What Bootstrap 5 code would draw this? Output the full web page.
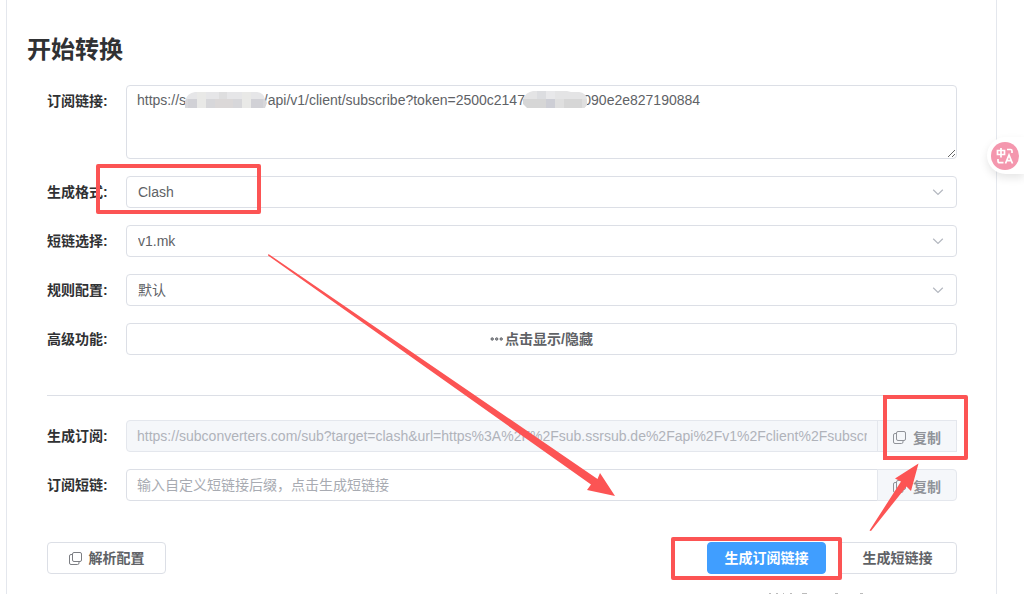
<!DOCTYPE html>
<html lang="zh-CN">
<head>
<meta charset="utf-8">
<meta name="viewport" content="width=device-width, initial-scale=1">
<title>开始转换</title>
<link href="https://cdn.jsdelivr.net/npm/bootstrap@5.3.0/dist/css/bootstrap.min.css" rel="stylesheet">
<style>
  body { font-family: "Liberation Sans", "Noto Sans CJK SC", sans-serif; font-size: 14px; line-height: 20px; color: #606266; background: #fff; }
  .page-shell { height: 100vh; overflow: hidden; padding-left: 6px; padding-right: 27px; }
  .panel { min-height: 100vh; border-left: 1px solid #e4e7ed; border-right: 1px solid #e4e7ed; padding: 34px 39px 0 40px; }
  .panel-title { font-size: 24px; line-height: 32px; font-weight: 700; color: #303133; margin: 0 0 19px -20px; }
  .field-row { display: flex; align-items: flex-start; margin-bottom: 17px; }
  .field-label { flex: none; width: 79px; font-weight: 700; color: #303133; line-height: 32px; }
  .field-body { flex: 1 1 0; min-width: 0; }
  .form-control, .form-select { font-size: 14px; line-height: 20px; color: #606266; border: 1px solid #dcdfe6; border-radius: 4px; padding: 5px 10px; height: 32px; }
  .form-select { padding: 5px 30px 5px 11px; background-position: right 12px center; background-size: 12px 12px;
    background-image: url("data:image/svg+xml,%3Csvg xmlns='http://www.w3.org/2000/svg' viewBox='0 0 12 12'%3E%3Cpath d='M1.2 3.7 6 8.4l4.8-4.7' fill='none' stroke='%23b4b8c0' stroke-width='1.2'/%3E%3C/svg%3E"); }
  textarea.form-control { height: 74px; padding-top: 4px; resize: vertical; }
  .form-control:disabled { background: #f5f7fa; border-color: #e4e7ed; color: #b0b3ba; opacity: 1; }
  .form-control::placeholder { color: #a8abb2; opacity: 1; }
  .btn { font-size: 14px; line-height: 20px; font-weight: 700; color: #606266; border: 1px solid #dcdfe6; border-radius: 4px; padding: 5px 0; height: 32px; display: inline-flex; align-items: center; justify-content: center; gap: 7px; background: #fff; }
  .btn-action { width: 119px; }
  .btn-main { background: #409eff; border-color: #409eff; color: #fff; }
  .btn-copy { width: 80px; padding-top: 7px; padding-bottom: 3px; background: #f5f7fa; color: #909399; border-color: #e4e7ed; }
  .btn-copy svg { margin-bottom: 2px; }
  .btn-dots { gap: 1px; }
  .submit-group { gap: 12px; }
  .form-rule { height: 1px; background: #dcdfe6; margin: 40px 0 24px; border: 0; opacity: 1; }
  .masked { left: 57px; top: 7px; }
  .masked-token { left: 397px; top: 6px; }
  .callout-box { border: 4px solid #fc5454; border-radius: 2px; pointer-events: none; z-index: 10; }
  .callout-format { left: 49px; top: -12px; width: 165px; height: 50px; }
  .callout-copy { right: -11px; top: -25px; width: 85px; height: 65px; }
  .callout-submit { left: -36px; top: -5px; width: 171px; height: 43px; }
  .callout-arrows { left: 0; top: 0; width: 100%; height: 594px; pointer-events: none; z-index: 11; }
  .translate-tab { right: 0; top: 137px; width: 37px; height: 37px; padding: 0 0 0 4px; border: 0; border-radius: 19px 0 0 19px; background: #fff; box-shadow: 0 4px 9px rgba(0,0,0,.1); display: flex; align-items: center; z-index: 12; }
</style>
</head>
<body>
<div class="page-shell position-relative">
  <main class="panel">
    <h1 class="panel-title">开始转换</h1>
    <form>
      <div class="field-row">
        <label class="field-label" for="source">订阅链接:</label>
        <div class="field-body position-relative">
          <textarea class="form-control d-block" id="source" spellcheck="false">https://s&nbsp;&nbsp;&nbsp;&nbsp;&nbsp;&nbsp;&nbsp;&nbsp;&nbsp;&nbsp;&nbsp;&nbsp;&nbsp;&nbsp;&nbsp;&nbsp;&nbsp;&nbsp;&nbsp;&nbsp;/api/v1/client/subscribe?token=2500c2147&nbsp;&nbsp;&nbsp;&nbsp;&nbsp;&nbsp;&nbsp;&nbsp;&nbsp;&nbsp;&nbsp;&nbsp;&nbsp;&nbsp;&nbsp;090e2e827190884</textarea>
          <svg class="masked position-absolute" width="86" height="17" aria-hidden="true">
            <clipPath id="mask-host"><path d="M2 16V9Q4 1 12 0H74Q81 1 82 7L84 11L82 16Z"/></clipPath>
            <g clip-path="url(#mask-host)">
              <path fill="#e6e6e8" d="M0 0h86v7H0z"/><path fill="#d7d7da" d="M0 7h86v10H0z"/>
              <path fill="#e9e9e7" d="M14 0h9v17h-9zM59 0h9v17h-9z"/><path fill="#dededf" d="M36 0h8v7h-8z"/><path fill="#d1d1d6" d="M5 7h9v10H5zM68 7h12v10H68z"/><path fill="#dbd8d8" d="M32 7h18v10H32z"/>
            </g>
          </svg>
          <svg class="masked-token position-absolute" width="64" height="17" aria-hidden="true">
            <clipPath id="mask-token"><path d="M4 17L0 13V8Q3 1 10 0H44L48 1H56Q63 2 64 8V14L61 17Z"/></clipPath>
            <g clip-path="url(#mask-token)">
              <path fill="#e4e4e5" d="M0 0h64v8H0z"/><path fill="#d6d6d6" d="M0 8h64v9H0z"/>
              <path fill="#dcdde0" d="M14 0h9v8h-9z"/><path fill="#e8e8ea" d="M23 0h9v8h-9z"/><path fill="#cdced5" d="M23 8h9v9h-9z"/><path fill="#dfdfdf" d="M32 8h9v9h-9zM59 8h5v9h-5z"/>
            </g>
          </svg>
        </div>
      </div>
      <div class="field-row position-relative">
        <label class="field-label" for="target">生成格式:</label>
        <div class="field-body"><select class="form-select" id="target"><option>Clash</option></select></div>
        <div class="callout-box callout-format position-absolute"></div>
      </div>
      <div class="field-row">
        <label class="field-label" for="shortener">短链选择:</label>
        <div class="field-body"><select class="form-select" id="shortener"><option>v1.mk</option></select></div>
      </div>
      <div class="field-row">
        <label class="field-label" for="rules">规则配置:</label>
        <div class="field-body"><select class="form-select" id="rules"><option>默认</option></select></div>
      </div>
      <div class="field-row">
        <label class="field-label" for="advanced">高级功能:</label>
        <div class="field-body">
          <button class="btn btn-dots w-100" type="button" id="advanced">
            <svg width="14" height="14" viewBox="0 0 14 14" aria-hidden="true"><g fill="#a8abb2" stroke="#606266"><circle cx="2.2" cy="7" r="1.2"/><circle cx="6.7" cy="7" r="1.2"/><circle cx="11.2" cy="7" r="1.2"/></g></svg>点击显示/隐藏
          </button>
        </div>
      </div>
      <hr class="form-rule">
      <div class="field-row">
        <label class="field-label" for="result">生成订阅:</label>
        <div class="field-body input-group flex-nowrap position-relative">
          <input class="form-control" id="result" disabled value="https://subconverters.com/sub?target=clash&amp;url=https%3A%2F%2Fsub.ssrsub.de%2Fapi%2Fv1%2Fclient%2Fsubscribe">
          <button class="btn btn-copy" type="button">
            <svg width="13" height="13" viewBox="0 0 13 13" fill="none" stroke="#909399" aria-hidden="true"><rect x="3.5" y=".5" width="9" height="9" rx="1.5"/><path d="M3.5 2.5H2Q.5 2.5 .5 4V11Q.5 12.5 2 12.5H8.5Q10 12.5 10 11V9.5"/></svg>复制
          </button>
          <div class="callout-box callout-copy position-absolute"></div>
        </div>
      </div>
      <div class="field-row">
        <label class="field-label" for="suffix">订阅短链:</label>
        <div class="field-body input-group flex-nowrap">
          <input class="form-control" id="suffix" placeholder="输入自定义短链接后缀，点击生成短链接">
          <button class="btn btn-copy" type="button">
            <svg width="13" height="13" viewBox="0 0 13 13" fill="none" stroke="#909399" aria-hidden="true"><rect x="3.5" y=".5" width="9" height="9" rx="1.5"/><path d="M3.5 2.5H2Q.5 2.5 .5 4V11Q.5 12.5 2 12.5H8.5Q10 12.5 10 11V9.5"/></svg>复制
          </button>
        </div>
      </div>
      <div class="d-flex justify-content-between pt-4">
        <button class="btn btn-action" type="button">
          <svg width="13" height="13" viewBox="0 0 13 13" fill="none" stroke="#7c7e83" aria-hidden="true"><rect x="3.5" y=".5" width="9" height="9" rx="1.5"/><path d="M3.5 2.5H2Q.5 2.5 .5 4V11Q.5 12.5 2 12.5H8.5Q10 12.5 10 11V9.5"/></svg>解析配置
        </button>
        <div class="submit-group d-flex position-relative">
          <button class="btn btn-action btn-main" type="button">生成订阅链接</button>
          <button class="btn btn-action" type="button">生成短链接</button>
          <div class="callout-box callout-submit position-absolute"></div>
        </div>
      </div>
    </form>
  </main>

  <svg class="callout-arrows position-absolute" viewBox="0 0 1024 594" preserveAspectRatio="none" aria-hidden="true">
    <g fill="#fc5454">
      <path d="M268.500 254L597.500 479L600 473L615 496L587 490L591 484.500L268 255.500Z"/>
      <path d="M869.500 530.500L901 481.500L895 478.500L918.500 463.500L911 491L906.500 486.500L871 531Z"/>
    </g>
    <path stroke="#bbb" d="M769 593.500h2M776 593.500h2M783 593.500h1M790 593.500h2M802 593.500h5M835 593.500h3M860 593.500h3"/>
  </svg>

  <button class="translate-tab position-absolute" type="button" aria-label="翻译">
    <svg width="28" height="28" viewBox="0 0 28 28" fill="none" stroke="#fff" stroke-width="1.7" aria-hidden="true">
      <circle cx="14" cy="14" r="14" fill="#f497ae" stroke="none"/>
      <path d="M6.500 8.500h7v4h-7zM10 6v9.500M16 7.500h3.500q1.500 0 1.500 1.500v2M7 17v2q0 1.700 1.700 1.700H12.500M14.500 21.500L18 13l3.500 8.500M15.700 18.700h4.600"/>
    </svg>
  </button>
</div>
<script src="https://cdn.jsdelivr.net/npm/bootstrap@5.3.0/dist/js/bootstrap.bundle.min.js"></script>
</body>
</html>
